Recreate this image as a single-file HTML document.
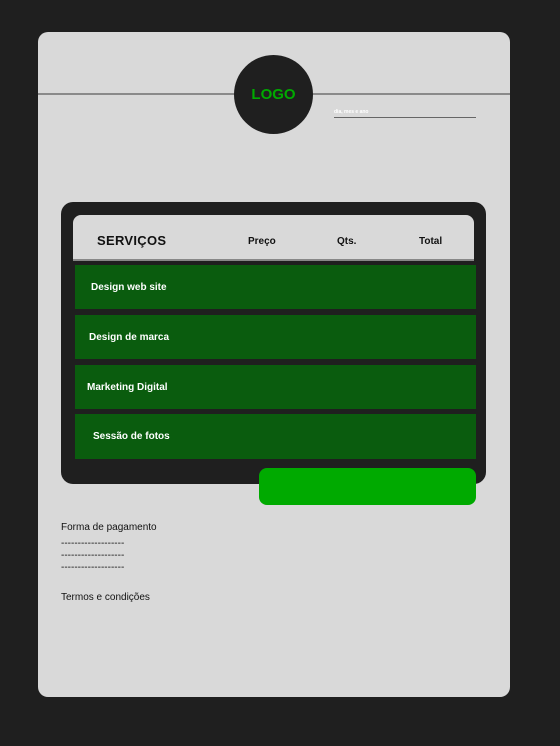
<!DOCTYPE html>
<html><head><meta charset="utf-8"><style>
*{margin:0;padding:0;box-sizing:border-box}
body{width:560px;height:746px;background:#1f1f1f;position:relative;overflow:hidden;font-family:"Liberation Sans","DejaVu Sans",sans-serif}
.a{position:absolute}
.card{left:38px;top:32px;width:472px;height:665px;background:#d9d9d9;border-radius:10px}
.hl{left:38px;top:93px;width:472px;height:2px;background:#8a8a8a}
.circ{left:234px;top:55px;width:79px;height:79px;border-radius:50%;background:#1f1f1f;color:#00aa00;font-weight:bold;font-size:15px;display:flex;align-items:center;justify-content:center}
.date{left:334px;top:109px;width:142px;height:9px;border-bottom:1px solid #666;color:#fff;font-size:5px;font-weight:bold;line-height:6px}
.box{left:61px;top:202px;width:425px;height:282px;background:#1f1f1f;border-radius:12px}
.hdr{left:73px;top:215px;width:401px;height:46px;background:#d9d9d9;border-radius:8px 8px 0 0;border-bottom:2px solid #888}
.h{font-weight:bold;font-size:10px;color:#111;top:236px}
.row{left:75px;width:401px;height:44px;background:#0a5c0e;color:#fff;font-weight:bold;font-size:10px;display:flex;align-items:center}
.btn{left:259px;top:468px;width:217px;height:37px;background:#00aa00;border-radius:8px}
.t{font-size:10px;color:#111;left:61px}
</style></head><body>
<div class="a card"></div>
<div class="a hl"></div>
<div class="a circ">LOGO</div>
<div class="a date">dia, mes e ano</div>
<div class="a box"></div>
<div class="a hdr"></div>
<div class="a h" style="left:97px;top:233px;font-size:13px;letter-spacing:0.3px">SERVIÇOS</div>
<div class="a h" style="left:248px">Preço</div>
<div class="a h" style="left:337px">Qts.</div>
<div class="a h" style="left:419px">Total</div>
<div class="a row" style="top:265px;padding-left:16px">Design web site</div>
<div class="a row" style="top:315px;padding-left:14px">Design de marca</div>
<div class="a row" style="top:365px;padding-left:12px">Marketing Digital</div>
<div class="a row" style="top:414px;padding-left:18px;height:45px">Sessão de fotos</div>
<div class="a btn"></div>
<div class="a t" style="top:522px">Forma de pagamento</div>
<div class="a t" style="top:538px;line-height:12px">-------------------<br>-------------------<br>-------------------</div>
<div class="a t" style="top:592px">Termos e condições</div>
</body></html>
